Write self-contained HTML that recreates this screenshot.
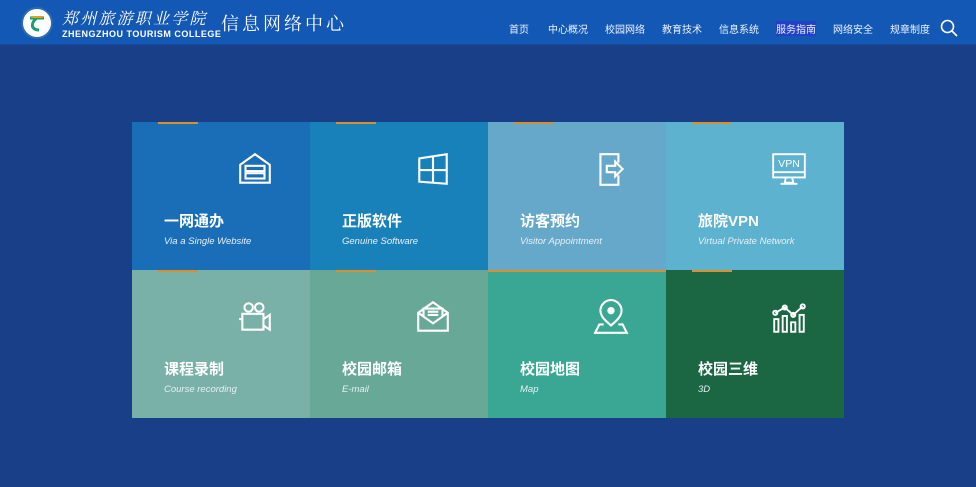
<!DOCTYPE html>
<html><head><meta charset="utf-8"><style>
*{margin:0;padding:0;box-sizing:border-box}
body{width:976px;height:487px;background:#1a3f89;font-family:"Liberation Sans","Noto Sans CJK SC",sans-serif;position:relative;overflow:hidden}
.hdr{position:absolute;left:0;top:0;width:976px;height:45px;background:#1458b5;border-bottom:1px solid #1a4a9a}
.logo{position:absolute;left:21px;top:7px;width:32px;height:32px;border-radius:50%;background:#fff;border:2px solid #2a6ab0}
.cn{position:absolute;left:62px;top:6px;color:#fff;font-family:"Noto Serif CJK SC",serif;font-size:16px;letter-spacing:2.2px;font-style:italic;white-space:nowrap}
.en{position:absolute;left:62px;top:29px;color:#fff;font-size:9px;font-weight:bold;letter-spacing:0.5px;white-space:nowrap}
.sub{position:absolute;left:221px;top:10px;color:#fff;font-family:"Noto Serif CJK SC",serif;font-size:18px;letter-spacing:3px;white-space:nowrap}
.nav{position:absolute;top:21px;font-size:10px;color:#eef3fb;font-family:"Noto Sans CJK SC",sans-serif}
.tile{position:absolute;width:178px;height:148px}
.bar{position:absolute;top:0;left:26px;width:40px;height:2px;background:#d9902a}
.t{position:absolute;left:32px;top:88px;color:#fff;font-size:15px;font-weight:bold;font-family:"Liberation Sans","Noto Sans CJK SC",sans-serif}
.s{position:absolute;left:32px;top:114px;color:#e6f0f6;font-size:9.5px;font-style:italic}
.ic{position:absolute;left:104px;top:28px}
</style></head><body>
<div class="hdr">
<div class="logo"><svg width="28" height="28" viewBox="0 0 28 28"><path d="M7 9h14M14 9c-6 4-7 12 2 12" stroke="#1aa070" stroke-width="3" fill="none"/><path d="M8 8h12" stroke="#e0a020" stroke-width="2"/></svg></div>
<div class="cn">郑州旅游职业学院</div>
<div class="en">ZHENGZHOU TOURISM COLLEGE</div>
<div class="sub">信息网络中心</div>
<span class="nav" style="left:509px">首页</span>
<span class="nav" style="left:548px">中心概况</span>
<span class="nav" style="left:605px">校园网络</span>
<span class="nav" style="left:662px">教育技术</span>
<span class="nav" style="left:719px">信息系统</span>
<span class="nav" style="left:776px;background:#2540c8">服务指南</span>
<span class="nav" style="left:833px">网络安全</span>
<span class="nav" style="left:890px">规章制度</span>
<svg style="position:absolute;left:940px;top:19px" width="18" height="18" viewBox="0 0 18 18"><circle cx="7.5" cy="7.5" r="6" stroke="#fff" stroke-width="1.6" fill="none"/><path d="M12 12l5 5" stroke="#fff" stroke-width="1.6"/></svg>
</div>

<div class="tile" style="left:132px;top:122px;background:#1a6eb8"><div class="bar"></div>
<svg class="ic" width="38" height="38" viewBox="0 0 36 36" fill="none" stroke="#fff" stroke-width="2"><path d="M4 14L18 4l14 10v17H4z"/><rect x="9" y="15" width="18" height="5"/><rect x="9" y="22" width="18" height="5"/></svg>
<div class="t">一网通办</div><div class="s">Via a Single Website</div></div>

<div class="tile" style="left:310px;top:122px;background:#1981ba"><div class="bar"></div>
<svg class="ic" width="38" height="38" viewBox="0 0 36 36" fill="none" stroke="#fff" stroke-width="2"><path d="M5 8l26-4v28L5 30z M18 6v25 M5 19h26"/></svg>
<div class="t">正版软件</div><div class="s">Genuine Software</div></div>

<div class="tile" style="left:488px;top:122px;background:#66a8ca"><div class="bar"></div>
<svg class="ic" width="38" height="38" viewBox="0 0 36 36" fill="none" stroke="#fff" stroke-width="2"><path d="M25 12V4H8v29h17v-9"/><path d="M14 15h8v-4l7 7-7 7v-4h-8z"/></svg>
<div class="t">访客预约</div><div class="s">Visitor Appointment</div></div>

<div class="tile" style="left:666px;top:122px;background:#5db2cf"><div class="bar"></div>
<svg class="ic" width="38" height="38" viewBox="0 0 36 36" fill="none" stroke="#fff" stroke-width="1.8"><rect x="3" y="4" width="30" height="22"/><path d="M3 21h30M15 26l-1 5h8l-1-5M10 32h16"/><text x="18" y="16" fill="#fff" stroke="none" font-size="10" text-anchor="middle" font-family="Liberation Sans">VPN</text></svg>
<div class="t">旅院VPN</div><div class="s">Virtual Private Network</div></div>

<div class="tile" style="left:132px;top:270px;background:#79b0a7"><div class="bar"></div>
<svg class="ic" width="38" height="38" viewBox="0 0 36 36" fill="none" stroke="#fff" stroke-width="2"><circle cx="12" cy="9" r="4"/><circle cx="22" cy="9" r="4"/><rect x="6" y="15" width="20" height="15"/><path d="M26 20l6-4v14l-6-4M3 20h3"/></svg>
<div class="t">课程录制</div><div class="s">Course recording</div></div>

<div class="tile" style="left:310px;top:270px;background:#67a897"><div class="bar"></div>
<svg class="ic" width="38" height="38" viewBox="0 0 36 36" fill="none" stroke="#fff" stroke-width="2"><path d="M4 14l14-10 14 10v17H4z M4 14l14 10 14-10"/><path d="M9 18V10h18v8 M13 13h10M13 16h10"/></svg>
<div class="t">校园邮箱</div><div class="s">E-mail</div></div>

<div class="tile" style="left:488px;top:270px;background:#3aa794"><div class="bar" style="left:0;width:178px"></div>
<svg class="ic" width="38" height="38" viewBox="0 0 36 36" fill="none" stroke="#fff" stroke-width="2"><path d="M18 26c-6-5-10-9-10-14a10 10 0 0 1 20 0c0 5-4 9-10 14z"/><circle cx="18" cy="12" r="2.5" fill="#fff"/><path d="M11 25H7l-4 8h30l-4-8h-4"/></svg>
<div class="t">校园地图</div><div class="s">Map</div></div>

<div class="tile" style="left:666px;top:270px;background:#1b6743"><div class="bar"></div>
<svg class="ic" width="38" height="38" viewBox="0 0 36 36" fill="none" stroke="#fff" stroke-width="1.8"><path d="M5 14l9-5 8 7 9-8"/><circle cx="5" cy="14" r="2"/><circle cx="14" cy="9" r="2"/><circle cx="22" cy="16" r="2"/><circle cx="31" cy="8" r="2"/><rect x="4" y="20" width="4" height="12"/><rect x="12" y="17" width="4" height="15"/><rect x="20" y="23" width="4" height="9"/><rect x="28" y="16" width="4" height="16"/></svg>
<div class="t">校园三维</div><div class="s">3D</div></div>
</body></html>
